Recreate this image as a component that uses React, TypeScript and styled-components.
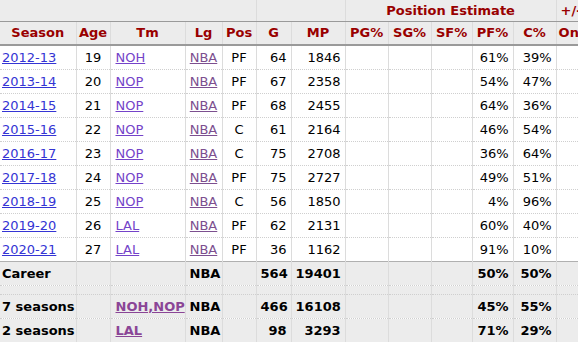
import React from "react";
import styled, { createGlobalStyle } from "styled-components";

const Global = createGlobalStyle`
  html, body { margin: 0; padding: 0; background: #fff; }
  body { font-family: "DejaVu Sans", Verdana, sans-serif; font-size: 13px; color: #000; overflow: hidden; }
`;

const Table = styled.table`
  border-collapse: collapse;
  table-layout: fixed;
  width: 640px;
  font-size: 13px;
  line-height: 16px;
`;

const Over = styled.th<{ $last?: boolean }>`
  height: 21px;
  padding: 0 4px;
  background: #ececec;
  color: #990000;
  font-weight: bold;
  text-align: center;
  border-bottom: 1px solid #9a9a9a;
  border-right: 1px solid #dcdcdc;
  white-space: nowrap;
  overflow: hidden;
  text-align: ${(p) => (p.$last ? "left" : "center")};
`;

const Head = styled.th`
  height: 22px;
  padding: 0 2px;
  background: #ececec;
  color: #990000;
  font-weight: bold;
  text-align: center;
  border-bottom: 2px solid #9a9a9a;
  border-right: 1px solid #dcdcdc;
  white-space: nowrap;
  overflow: hidden;
`;

type Align = "left" | "center" | "right";

const Cell = styled.td<{ $align: Align; $pl?: number; $foot?: boolean; $top?: boolean }>`
  height: 23px;
  padding: 0 4px 0 ${(p) => p.$pl ?? 4}px;
  text-align: ${(p) => p.$align};
  border-right: 1px solid #dcdcdc;
  border-bottom: 1px dotted #cfcfcf;
  border-top: ${(p) => (p.$top ? "1px solid #b0b0b0" : "none")};
  background: ${(p) => (p.$foot ? "#ececec" : "#fff")};
  font-weight: ${(p) => (p.$foot ? "bold" : "normal")};
  white-space: nowrap;
  overflow: hidden;
`;

const Spacer = styled.td`
  height: 8px;
  padding: 0;
  background: #ececec;
  border-right: 1px solid #dcdcdc;
  border-bottom: 1px dotted #cfcfcf;
`;

const Link = styled.a<{ $kind: "season" | "team" | "lg" | "foot" }>`
  color: ${(p) =>
    p.$kind === "season"
      ? "#3434d4"
      : p.$kind === "team"
      ? "#7443c9"
      : p.$kind === "lg"
      ? "#7c4f8f"
      : "#8a4596"};
  text-decoration: underline;
  cursor: pointer;
`;

const widths = [76, 34, 75, 37, 34, 35, 54, 43, 43, 41, 41, 43, 84];

type Row = [string, string, string, string, string, string, string, string, string];

const rows: Row[] = [
  ["2012-13", "19", "NOH", "NBA", "PF", "64", "1846", "61%", "39%"],
  ["2013-14", "20", "NOP", "NBA", "PF", "67", "2358", "54%", "47%"],
  ["2014-15", "21", "NOP", "NBA", "PF", "68", "2455", "64%", "36%"],
  ["2015-16", "22", "NOP", "NBA", "C", "61", "2164", "46%", "54%"],
  ["2016-17", "23", "NOP", "NBA", "C", "75", "2708", "36%", "64%"],
  ["2017-18", "24", "NOP", "NBA", "PF", "75", "2727", "49%", "51%"],
  ["2018-19", "25", "NOP", "NBA", "C", "56", "1850", "4%", "96%"],
  ["2019-20", "26", "LAL", "NBA", "PF", "62", "2131", "60%", "40%"],
  ["2020-21", "27", "LAL", "NBA", "PF", "36", "1162", "91%", "10%"],
];

type Foot = { label: string; tm: string; g: string; mp: string; pf: string; c: string };
const foot: Foot[] = [
  { label: "7 seasons", tm: "NOH,NOP", g: "466", mp: "16108", pf: "45%", c: "55%" },
  { label: "2 seasons", tm: "LAL", g: "98", mp: "3293", pf: "71%", c: "29%" },
];

const heads = ["Season", "Age", "Tm", "Lg", "Pos", "G", "MP", "PG%", "SG%", "SF%", "PF%", "C%", "On-Court"];

export default function App() {
  return (
    <>
      <Global />
      <Table>
        <colgroup>
          {widths.map((w, i) => (
            <col key={i} style={{ width: w }} />
          ))}
        </colgroup>
        <thead>
          <tr>
            <Over colSpan={5}></Over>
            <Over colSpan={2}></Over>
            <Over colSpan={5}>Position Estimate</Over>
            <Over $last>+/- Per 100</Over>
          </tr>
          <tr>
            {heads.map((h) => (
              <Head key={h} style={h === "On-Court" ? { textAlign: "left" } : undefined}>
                {h}
              </Head>
            ))}
          </tr>
        </thead>
        <tbody>
          {rows.map((r) => (
            <tr key={r[0]}>
              <Cell $align="left" $pl={2}>
                <Link $kind="season">{r[0]}</Link>
              </Cell>
              <Cell $align="center">{r[1]}</Cell>
              <Cell $align="left" $pl={5}>
                <Link $kind="team">{r[2]}</Link>
              </Cell>
              <Cell $align="center">
                <Link $kind="lg">{r[3]}</Link>
              </Cell>
              <Cell $align="center">{r[4]}</Cell>
              <Cell $align="right">{r[5]}</Cell>
              <Cell $align="right">{r[6]}</Cell>
              <Cell $align="right"></Cell>
              <Cell $align="right"></Cell>
              <Cell $align="right"></Cell>
              <Cell $align="right">{r[7]}</Cell>
              <Cell $align="right">{r[8]}</Cell>
              <Cell $align="right"></Cell>
            </tr>
          ))}
          <tr>
            <Cell $align="left" $pl={2} $foot $top>Career</Cell>
            <Cell $align="center" $foot $top></Cell>
            <Cell $align="left" $foot $top></Cell>
            <Cell $align="center" $foot $top>NBA</Cell>
            <Cell $align="center" $foot $top></Cell>
            <Cell $align="right" $foot $top>564</Cell>
            <Cell $align="right" $foot $top>19401</Cell>
            <Cell $align="right" $foot $top></Cell>
            <Cell $align="right" $foot $top></Cell>
            <Cell $align="right" $foot $top></Cell>
            <Cell $align="right" $foot $top>50%</Cell>
            <Cell $align="right" $foot $top>50%</Cell>
            <Cell $align="right" $foot $top></Cell>
          </tr>
          <tr>
            {widths.map((_, i) => (
              <Spacer key={i} />
            ))}
          </tr>
          {foot.map((f) => (
            <tr key={f.label}>
              <Cell $align="left" $pl={2} $foot>{f.label}</Cell>
              <Cell $align="center" $foot></Cell>
              <Cell $align="left" $pl={5} $foot>
                <Link $kind="foot">{f.tm}</Link>
              </Cell>
              <Cell $align="center" $foot>NBA</Cell>
              <Cell $align="center" $foot></Cell>
              <Cell $align="right" $foot>{f.g}</Cell>
              <Cell $align="right" $foot>{f.mp}</Cell>
              <Cell $align="right" $foot></Cell>
              <Cell $align="right" $foot></Cell>
              <Cell $align="right" $foot></Cell>
              <Cell $align="right" $foot>{f.pf}</Cell>
              <Cell $align="right" $foot>{f.c}</Cell>
              <Cell $align="right" $foot></Cell>
            </tr>
          ))}
        </tbody>
      </Table>
    </>
  );
}
